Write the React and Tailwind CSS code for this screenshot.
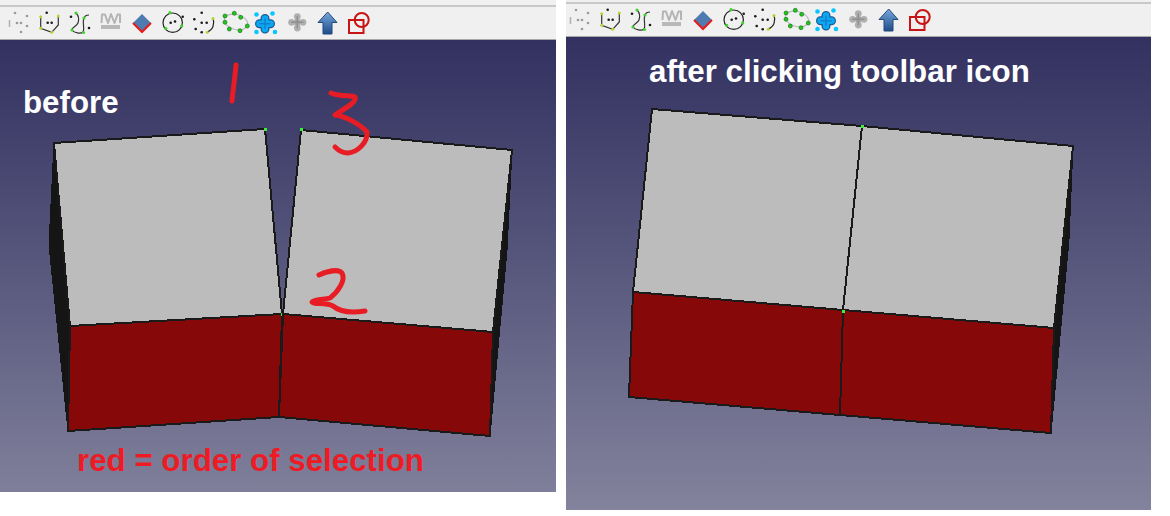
const black = "#1a1a1a"

function Dot({ x, y, c = black, r = 1.3 }) {
    return <circle cx={x} cy={y} r={r} fill={c} />
}

function Icon({ children }) {
    return (
        <svg width="24" height="24" viewBox="0 0 24 24" fill="none" className="shrink-0 overflow-visible">
            {children}
        </svg>
    )
}

function ToolbarIcons() {
    const yellow = "#b5d334"
    const green = "#3fd42b"
    return (
        <>
            <Icon>
                <path d="M3.5 10v7" stroke="#b0b0b0" strokeWidth="1.5" />
                {[[9, 3], [21, 6], [11, 13], [15, 13], [21, 16], [15, 22]].map(([x, y]) => <Dot key={x + "-" + y} x={x} y={y} c="#9a9a9a" />)}
            </Icon>
            <Icon>
                <path d="M3.7 6.7V18.3L14.7 22.3L21.3 15V6" stroke="#333" strokeWidth="1.2" />
                <Dot x={9.7} y={2.7} /><Dot x={10.7} y={12.7} /><Dot x={14.7} y={12.7} />
                <Dot x={3.7} y={6.7} c={yellow} r={1.5} /><Dot x={3.7} y={18.3} c={yellow} r={1.5} />
                <Dot x={14.7} y={22.3} c={yellow} r={1.5} /><Dot x={21.3} y={6} c={yellow} r={1.5} />
            </Icon>
            <Icon>
                <path d="M8 3C11 6 11 10 10 13C9 16 3 18 4 20C6 23 13 24 15 22C17 19 14 12 16 8C17 5 19 5 21 5" stroke="#333" strokeWidth="1.2" />
                <Dot x={8} y={3} c={green} r={1.6} /><Dot x={4} y={20} c={green} r={1.6} />
                <Dot x={15.5} y={22.5} c={green} r={1.6} /><Dot x={16} y={8} c={green} r={1.6} />
                <Dot x={3} y={6.7} /><Dot x={21} y={18} />
            </Icon>
            <Icon>
                <path d="M2.5 13L3 4.5H6L9 13L12 4L15.5 13L18.5 4.5H21V13" stroke="#b4b4b4" strokeWidth="2" strokeLinejoin="round" />
                <rect x="2" y="15" width="19" height="4" fill="#b8b8b8" />
            </Icon>
            <Icon>
                <polygon points="3,13 12,4 21,13 12,22" fill="#4f7cb0" />
                <path d="M3 13L12 22L21 13" stroke="#e81a1a" strokeWidth="2" />
            </Icon>
            <Icon>
                <circle cx="11.7" cy="12.7" r="9.7" stroke="#222" strokeWidth="1.2" />
                <Dot x={9} y={2.7} c={green} r={1.6} /><Dot x={4.7} y={18.3} c={green} r={1.6} />
                <Dot x={20.7} y={16} c={green} r={1.6} /><Dot x={21.7} y={6.7} />
                <Dot x={9.7} y={12.7} /><Dot x={14} y={11.5} />
            </Icon>
            <Icon>
                <path d="M21 8C23 14 21 20 15 22" stroke="#222" strokeWidth="1.2" />
                <Dot x={21} y={8.5} c={yellow} r={1.5} /><Dot x={15.3} y={22.3} c={yellow} r={1.5} />
                <Dot x={9.7} y={2.7} /><Dot x={2.3} y={9.3} /><Dot x={9.7} y={12.7} />
                <Dot x={14.7} y={12.7} /><Dot x={3.7} y={19} /><Dot x={9.7} y={22.3} />
            </Icon>
            <Icon>
                <ellipse cx="13" cy="12" rx="12" ry="7.5" transform="rotate(15 13 12)" stroke="#bdbdbd" strokeWidth="1.2" />
                {[[2, 6], [11.3, 3.3], [17.7, 7.3], [24.3, 16], [17, 20.7], [6.3, 19], [2, 12.3]].map(([x, y]) => (
                    <circle key={x + "-" + y} cx={x} cy={y} r="2" fill="#1fc71f" stroke="#0c6b0c" strokeWidth="0.6" />
                ))}
            </Icon>
            <Icon>
                <path d="M11 8.5V19M5.5 13.7H16.5" stroke="#1b5c96" strokeWidth="9" strokeLinecap="round" />
                <path d="M11 8.5V19M5.5 13.7H16.5" stroke="#0ca8f2" strokeWidth="6.5" strokeLinecap="round" />
                <path d="M11 9V18.5M6 13.7H16" stroke="#1380cc" strokeWidth="1.5" strokeLinecap="round" />
                {[[2.5, 4.5], [18.5, 3.5], [2.5, 22], [21, 22]].map(([x, y]) => (
                    <circle key={x + "-" + y} cx={x} cy={y} r="2.3" fill="#08c6ff" />
                ))}
            </Icon>
            <Icon>
                <path d="M12.3 6.5V18.1M6.5 12.3H18.1" stroke="#a6a6a6" strokeWidth="4.5" />
                {[[12.3, 6.6], [12.3, 18], [6.6, 12.3], [18, 12.3]].map(([x, y]) => (
                    <circle key={x + "-" + y} cx={x} cy={y} r="3.4" fill="#b0b0b0" />
                ))}
                <path d="M12.3 6.5V18M6.5 12.3H18" stroke="#8f8f8f" strokeWidth="1.4" strokeLinecap="round" />
            </Icon>
            <Icon>
                <defs>
                    <linearGradient id="arrow-blue" x1="0" y1="0" x2="0" y2="1">
                        <stop offset="0" stopColor="#76a9dd" />
                        <stop offset="1" stopColor="#1f4c8a" />
                    </linearGradient>
                </defs>
                <polygon points="11.7,2 21,12.5 16,12.5 16,24 7,24 7,12.5 2,12.5" fill="url(#arrow-blue)" stroke="#24497a" strokeWidth="1" />
            </Icon>
            <Icon>
                <rect x="2" y="10" width="14.5" height="13" stroke="#c81414" strokeWidth="2" />
                <circle cx="14.7" cy="10" r="7" stroke="#c81414" strokeWidth="2" />
            </Icon>
        </>
    )
}

function Block({ face, front, side, vertices }) {
    return (
        <g shapeRendering="crispEdges">
            {side && <polygon points={side} fill="#151515" stroke="#151515" strokeWidth="1" />}
            <polygon points={face} fill="#bcbcbc" stroke={black} strokeWidth="2" />
            <polygon points={front} fill="#860808" stroke={black} strokeWidth="2" />
            {vertices.map(([x, y]) => <rect key={x + "-" + y} x={x - 1} y={y - 1} width="3" height="2.5" fill="#3cf03c" />)}
        </g>
    )
}

function Scribble({ d }) {
    return <path d={d} fill="none" stroke="#e81c24" strokeWidth="5" strokeLinecap="round" strokeLinejoin="round" />
}

const labelClass = "absolute font-['Liberation_Sans',sans-serif] font-bold leading-none whitespace-nowrap text-[31.3px]"

export default function App() {
    return (
        <div className="flex items-start w-[1170px] h-[516px] bg-white overflow-hidden">
            <div className="flex flex-col w-[556px] h-[492px] shrink-0">
                <div className="h-[40px] pt-[5px] bg-[#f0f0f0] border-b border-[#a8a8a8]">
                    <div className="flex gap-[7px] h-full pt-[3px] pl-[6px] border-t-2 border-[#c8c8c8]">
                        <ToolbarIcons />
                    </div>
                </div>
                <div className="relative flex-1 bg-gradient-to-b from-[#333160] to-[#807f9a]">
                    <svg className="absolute inset-0" width="556" height="452" viewBox="0 40 556 452">
                        <Block
                            face="54,143 265,129 282,314 70,326"
                            front="70,326 282,314 279,417 68,431"
                            side="54,143 49,245 68,431 70,326"
                            vertices={[[265, 129], [282, 314]]}
                        />
                        <Block
                            face="301,130 512,150 493,332 283,314"
                            front="283,314 493,332 490,436 279,417"
                            side="512,150 507,250 490,436 493,332"
                            vertices={[[301, 129]]}
                        />
                        <Scribble d="M236 65C235 78 233 90 232 101" />
                        <Scribble d="M331 93C340 97 350 95 355 97C358 102 342 110 335 115C345 116 360 124 367 132C368 142 358 152 348 153C342 153 338 150 335 147" />
                        <Scribble d="M319 275C328 271 338 269 342 273C346 280 338 292 330 298C325 300 316 298 312 302C314 305 326 302 333 306C340 312 352 313 365 311" />
                    </svg>
                    <span className={labelClass + " left-[23px] top-[47px] text-white"}>before</span>
                    <span className={labelClass + " left-[77px] top-[405px] text-[#ed1c24]"}>red = order of selection</span>
                </div>
            </div>
            <div className="flex flex-col w-[585px] h-[510px] ml-[10px] shrink-0">
                <div className="h-[37px] pt-[2px] bg-[#f0f0f0] border-b border-[#a8a8a8]">
                    <div className="flex gap-[7px] h-full pt-[3px] pl-[1px] border-t-2 border-[#c8c8c8]">
                        <ToolbarIcons />
                    </div>
                </div>
                <div className="relative flex-1 bg-gradient-to-b from-[#333160] to-[#84839d]">
                    <svg className="absolute inset-0" width="585" height="473" viewBox="566 37 585 473">
                        <Block
                            face="652,109 862,126 843,310 633,292"
                            front="633,292 843,310 840,415 629,397"
                            vertices={[[862, 126], [843, 311]]}
                        />
                        <Block
                            face="862,126 1073,146 1054,328 843,310"
                            front="843,310 1054,328 1051,433 840,415"
                            side="1073,146 1069,240 1051,433 1054,328"
                            vertices={[[862, 126], [843, 311]]}
                        />
                    </svg>
                    <span className={labelClass + " left-[83px] top-[19px] text-white"}>after clicking toolbar icon</span>
                </div>
            </div>
        </div>
    )
}
